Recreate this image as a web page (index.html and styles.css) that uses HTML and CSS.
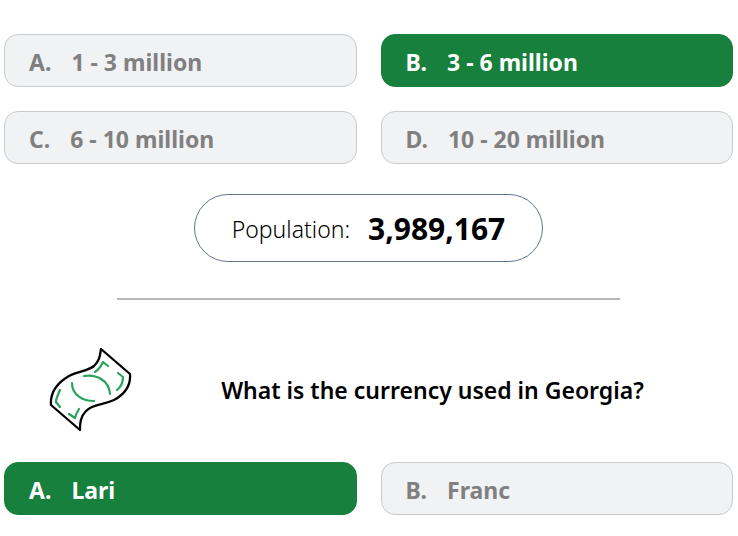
FILE: index.html
```html
<!DOCTYPE html>
<html lang="en">
<head>
    <meta charset="UTF-8">
    <meta name="viewport" content="width=device-width, initial-scale=1.0">
    <title>Georgia Quiz</title>
    <link rel="stylesheet" href="styles.css">
</head>
<body>

<main class="quiz">
    <div class="answers">
        <button class="answer" type="button"><span>A.</span><span>1 - 3 million</span></button>
        <button class="answer correct" type="button"><span>B.</span><span>3 - 6 million</span></button>
        <button class="answer" type="button"><span>C.</span><span>6 - 10 million</span></button>
        <button class="answer" type="button"><span>D.</span><span>10 - 20 million</span></button>
    </div>

    <p class="fact">Population: <strong>3,989,167</strong></p>

    <hr class="divider">

    <div class="question">
        <svg class="icon" viewBox="0 0 84 84" fill="none" stroke-linecap="round" stroke-linejoin="round" aria-hidden="true">
            <path class="note" d="M53 1 L82 26 C83 38 77 46 66 52 C53 58 46 55 38 63 C32 69 32 76 32 82 L3 57 C2 44 9 35 21 28 C31 23 40 23 46 18 C52 12 52 7 53 1 Z"/>
            <path class="detail" d="M47 24 C52 21 53 18 55 14 L60 18 M70 25 L75 29 C75 34 74 38 69 42 M36 28 C48 26 61 32 62 46 M24 35 C24 48 36 53 46 53 M12 42 C10 47 8 50 8 54 L12 59 M21 66 L27 70 C28 66 29 64 31 61"/>
        </svg>
        <h2>What is the currency used in Georgia?</h2>
    </div>

    <div class="answers">
        <button class="answer correct" type="button"><span>A.</span><span>Lari</span></button>
        <button class="answer" type="button"><span>B.</span><span>Franc</span></button>
    </div>
</main>

</body>
</html>
```

FILE: styles.css
```css
* {
    box-sizing: border-box;
}
body {
    margin: 0;
    background-color: white;
    color: black;
    font-family: "Segoe UI", "Noto Sans", "Open Sans", sans-serif;
}
.quiz {
    padding: 34px 5px 20px 4px;
}
.answers {
    display: grid;
    grid-template-columns: 1fr 1fr;
    gap: 24px;
}
.answer {
    display: flex;
    align-items: center;
    gap: 20px;
    padding: 12px 24px 8px;
    border: 1px solid #c8cacd;
    border-radius: 14px;
    background-color: #f1f2f4;
    color: #808080;
    font-family: inherit;
    font-size: 23px;
    font-weight: 700;
    line-height: 31px;
    text-align: left;
    cursor: pointer;
}
.answer.correct {
    border-color: #17803d;
    background-color: #17803d;
    color: white;
}
.fact {
    display: flex;
    align-items: center;
    justify-content: center;
    gap: 18px;
    width: fit-content;
    margin: 30px auto 36px;
    padding: 13px 37px 11px;
    border: 1px solid #64748b;
    border-radius: 34px;
    font-size: 23px;
    font-weight: 300;
    line-height: 42px;
}
.fact strong {
    font-size: 30px;
    font-weight: 700;
}
.divider {
    width: 69%;
    height: 2px;
    margin: 0 auto 48px;
    border: none;
    background-color: #b4b8b8;
}
.question {
    display: flex;
    align-items: center;
    margin-bottom: 30px;
    padding-left: 44px;
}
.question h2 {
    flex: 1;
    margin: 0;
    font-size: 23px;
    font-weight: 600;
    line-height: 32px;
    text-align: center;
}
.icon {
    width: 84px;
    height: 84px;
}
.note {
    stroke: black;
    stroke-width: 2.3;
}
.detail {
    stroke: #27a35a;
    stroke-width: 2.2;
}
```
